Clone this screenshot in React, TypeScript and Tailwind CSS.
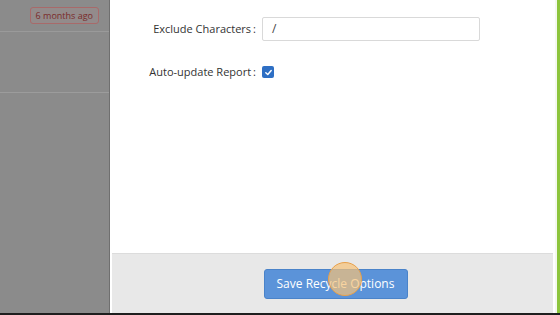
import React from 'react';

const App = () => {
  return (
    <div
      className="w-[560px] h-[315px] flex flex-col overflow-hidden bg-white"
      style={{ fontFamily: '"Open Sans", "Noto Sans", sans-serif' }}
    >
      <div className="flex flex-1 min-h-0">
        {/* Dimmed page behind the modal */}
        <div className="w-[110px] bg-[#8b8b8b] border-r border-[#6f6f6f] flex flex-col">
          <div className="h-[32px] flex items-center justify-end pr-[10px] border-b border-[#9a9a9a]">
            <span className="text-[9px] leading-none text-[#7a2a2a] border border-[#a86a6a] bg-[#938b8b] rounded-[3px] px-[5px] py-[3px]">
              6 months ago
            </span>
          </div>
          <div className="h-[61px] border-b border-[#9c9c9c]"></div>
          <div className="flex-1"></div>
        </div>

        {/* Modal */}
        <div className="flex-1 flex flex-col bg-white px-[2px]">
          <div className="flex-1 flex flex-col pt-[17px] text-[11px] text-[#333]">
            <div className="flex items-center h-[24px]">
              <div className="w-[150px] text-right pr-[6px]">
                Exclude Characters<span className="ml-[2px]">:</span>
              </div>
              <div className="w-[218px] h-[24px] border border-[#d9d9d9] rounded-[2px] flex items-center pl-[9px] text-[12px] text-[#444]">
                /
              </div>
            </div>
            <div className="flex items-center h-[24px] mt-[19px]">
              <div className="w-[150px] text-right pr-[6px]">
                Auto-update Report<span className="ml-[2px]">:</span>
              </div>
              <div className="w-[12px] h-[12px] rounded-[2px] bg-[#2e6fc4] flex items-center justify-center">
                <svg width="9" height="9" viewBox="0 0 10 10" fill="none">
                  <path d="M2 5.2 L4.2 7.3 L8 2.8" stroke="white" strokeWidth="1.6" strokeLinecap="round" strokeLinejoin="round" />
                </svg>
              </div>
            </div>
          </div>
          <div className="h-[60px] bg-[#e8e8e8] border-t border-[#dcdcdc] flex justify-center pt-[15px]">
            <div className="relative ml-[6px]">
              <button className="w-[144px] h-[30px] bg-[#5b93d9] border border-[#4a83c9] rounded-[3px] text-white text-[12px]">
                Save Recycle Options
              </button>
              <div className="absolute left-[64px] top-[-7px] w-[34px] h-[34px] rounded-full bg-[#f7c278]/70 border border-[#e8a04a]"></div>
            </div>
          </div>
        </div>

        <div className="w-[2px] bg-[#f4f8ee]"></div>
        <div className="w-[3px] bg-[#8cc43c]"></div>
      </div>
      <div className="h-[2px] bg-[#1e1e1e]"></div>
    </div>
  );
};

export default App;
